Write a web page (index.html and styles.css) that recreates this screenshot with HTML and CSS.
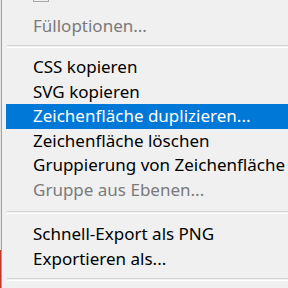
FILE: index.html
```html
<!DOCTYPE html>
<html>
<head>
  <title>Kontextmenü</title>
  <meta charset="utf-8" />
  <link rel="stylesheet" href="styles.css">
</head>
<body>
  <div class="edge"></div>
  <ul class="menu">
    <li class="item top"><span class="box"></span></li>
    <li class="item disabled">Fülloptionen...</li>
    <li class="sep first"></li>
    <li class="item">CSS kopieren</li>
    <li class="item">SVG kopieren</li>
    <li class="item active">Zeichenfläche duplizieren...</li>
    <li class="item">Zeichenfläche löschen</li>
    <li class="item">Gruppierung von Zeichenfläche</li>
    <li class="item disabled">Gruppe aus Ebenen...</li>
    <li class="sep"></li>
    <li class="item">Schnell-Export als PNG</li>
    <li class="item">Exportieren als...</li>
    <li class="sep last"></li>
  </ul>
</body>
</html>
```

FILE: styles.css
```css
html,
body {
  margin: 0;
  padding: 0;
  height: 288px;
  overflow: hidden;
}
body {
  display: flex;
  background: #f0f0f0;
  font-family: 'Noto Sans', sans-serif;
  font-size: 17px;
  color: #000;
}
.edge {
  width: 1px;
  background: linear-gradient(#e4e4e4 0, #e4e4e4 250px, #c0392b 250px);
  flex: none;
}
.menu {
  flex: 1;
  list-style: none;
  margin: -11px 0 0 0;
  padding: 0 0 0 4px;
  border-left: 1px solid #a0a0a0;
  background: #f0f0f0;
  white-space: nowrap;
  overflow: hidden;
}
.item {
  height: 24.5px;
  line-height: 24.5px;
  padding-left: 27px;
}
.item.top {
  position: relative;
}
.item.disabled {
  color: #7a7a7a;
}
.item.active {
  background: #0078d7;
  color: #fff;
}
.box {
  position: absolute;
  left: 27px;
  top: -2px;
  width: 14px;
  height: 13px;
  border: 1px solid #a8a8a8;
}
.sep {
  height: 20px;
  display: flex;
  align-items: center;
  padding-left: 1px;
}
.sep.first {
  height: 17px;
}
.sep.last {
  height: 16px;
}
.sep::before {
  content: '';
  flex: 1;
  height: 1px;
  border-top: 1px solid #d4d4d4;
  border-bottom: 1px solid #fff;
}
```
